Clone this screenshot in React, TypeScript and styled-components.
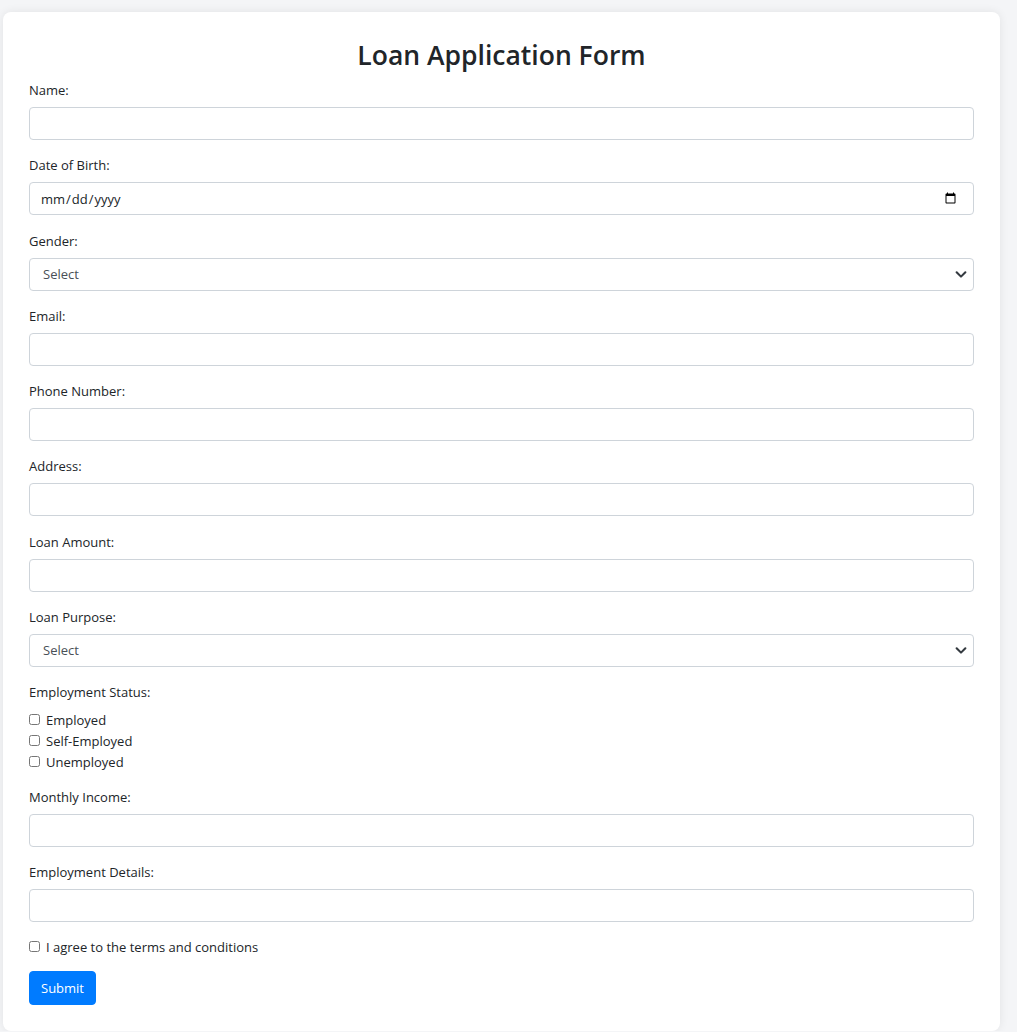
import React from "react";
import styled, { createGlobalStyle } from "styled-components";

const GlobalStyle = createGlobalStyle`
  html, body {
    margin: 0;
    padding: 0;
    background: #f4f5f7;
  }
  body {
    font-family: "Open Sans", "Noto Sans", sans-serif;
    color: #212529;
  }
  * { box-sizing: border-box; }
`;

const Page = styled.div`
  padding: 12px 17px 0 3px;
`;

const Card = styled.form`
  background: #ffffff;
  border-radius: 8px;
  box-shadow: 0 0 10px rgba(0, 0, 0, 0.08);
  padding: 26px 26px 26px 26px;
`;

const Title = styled.h2`
  margin: 0 0 7px 0;
  text-align: center;
  font-size: 26.5px;
  font-weight: 600;
  line-height: 34px;
  color: #212529;
`;

const Group = styled.div<{ $tight?: boolean }>`
  margin-bottom: ${(p) => (p.$tight ? "13px" : "14.25px")};
`;

const Label = styled.label`
  display: block;
  font-size: 13px;
  line-height: 22px;
  margin-bottom: 6px;
  color: #212529;
`;

const Input = styled.input`
  display: block;
  width: 100%;
  height: 33px;
  padding: 0 12px;
  font-family: inherit;
  font-size: 13px;
  color: #212529;
  background: #fff;
  border: 1px solid #ced4da;
  border-radius: 4px;
  outline: none;

  &[type="date"] {
    padding-left: 10px;
    padding-right: 14px;
  }
`;

const SelectWrap = styled.div`
  position: relative;
`;

const Select = styled.select`
  display: block;
  width: 100%;
  height: 33px;
  padding: 0 13px;
  font-family: inherit;
  font-size: 13px;
  color: #495057;
  background: #fff;
  border: 1px solid #ced4da;
  border-radius: 4px;
  appearance: none;
  -webkit-appearance: none;
  outline: none;
`;

const Chevron = styled.svg`
  position: absolute;
  right: 6px;
  top: 50%;
  width: 14px;
  height: 14px;
  margin-top: -7px;
  pointer-events: none;
`;

const CheckList = styled.div`
  display: flex;
  flex-direction: column;
  padding-top: 1px;
`;

const CheckRow = styled.label`
  display: flex;
  align-items: center;
  font-size: 13px;
  line-height: 21px;
  color: #212529;
`;

const Check = styled.input`
  width: 11px;
  height: 11px;
  margin: -2px 6px 0 0;
`;

const Button = styled.button`
  display: block;
  height: 34px;
  padding: 0 11px;
  font-family: inherit;
  font-size: 13px;
  color: #fff;
  background: #007bff;
  border: 1px solid #007bff;
  border-radius: 4px;
`;

const ChevronIcon = () => (
  <Chevron viewBox="0 0 16 16">
    <path
      d="M3 6l5 5 5-5"
      fill="none"
      stroke="#343a40"
      strokeWidth="2.4"
      strokeLinecap="round"
      strokeLinejoin="round"
    />
  </Chevron>
);

const TextField = ({ label, type = "text" }: { label: string; type?: string }) => (
  <Group>
    <Label>{label}</Label>
    <Input type={type} />
  </Group>
);

const SelectField = ({ label, options }: { label: string; options: string[] }) => (
  <Group>
    <Label>{label}</Label>
    <SelectWrap>
      <Select defaultValue="">
        <option value="">Select</option>
        {options.map((o) => (
          <option key={o} value={o}>
            {o}
          </option>
        ))}
      </Select>
      <ChevronIcon />
    </SelectWrap>
  </Group>
);

export default function App() {
  return (
    <>
      <GlobalStyle />
      <Page>
        <Card onSubmit={(e) => e.preventDefault()}>
          <Title>Loan Application Form</Title>
          <TextField label="Name:" />
          <TextField label="Date of Birth:" type="date" />
          <SelectField label="Gender:" options={["Male", "Female", "Other"]} />
          <TextField label="Email:" type="email" />
          <TextField label="Phone Number:" type="tel" />
          <TextField label="Address:" />
          <TextField label="Loan Amount:" type="number" />
          <SelectField
            label="Loan Purpose:"
            options={["Home", "Car", "Education", "Personal"]}
          />
          <Group $tight>
            <Label>Employment Status:</Label>
            <CheckList>
              <CheckRow>
                <Check type="checkbox" />
                Employed
              </CheckRow>
              <CheckRow>
                <Check type="checkbox" />
                Self-Employed
              </CheckRow>
              <CheckRow>
                <Check type="checkbox" />
                Unemployed
              </CheckRow>
            </CheckList>
          </Group>
          <TextField label="Monthly Income:" type="number" />
          <TextField label="Employment Details:" />
          <Group $tight>
            <CheckRow>
              <Check type="checkbox" />
              I agree to the terms and conditions
            </CheckRow>
          </Group>
          <Button type="submit">Submit</Button>
        </Card>
      </Page>
    </>
  );
}
